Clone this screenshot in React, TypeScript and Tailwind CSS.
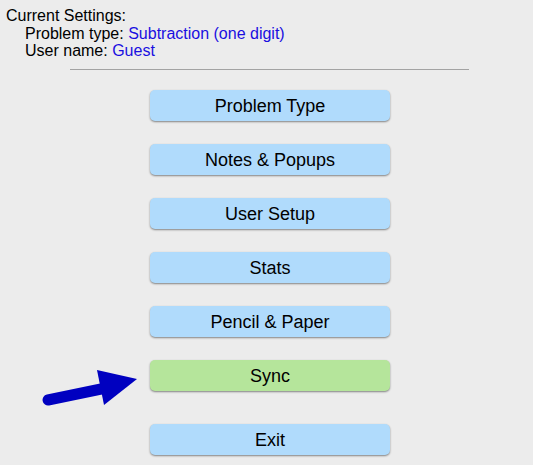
import React from "react";

const buttons = [
  { label: "Problem Type", color: "blue" },
  { label: "Notes & Popups", color: "blue" },
  { label: "User Setup", color: "blue" },
  { label: "Stats", color: "blue" },
  { label: "Pencil & Paper", color: "blue" },
  { label: "Sync", color: "green" },
];

function MenuButton({ label, color }: { label: string; color: string }) {
  return (
    <button
      type="button"
      className={
        "h-[31px] w-[240px] rounded-[5px] pt-[2px] text-[18px] text-black shadow-[0_1px_2px_rgba(0,0,0,0.45)] " +
        (color === "green" ? "bg-[#b5e59b]" : "bg-[#b0dbfc]")
      }
    >
      {label}
    </button>
  );
}

export default function App() {
  return (
    <main className="min-h-[465px] w-[533px] bg-[#ececec] pt-[7px] font-['Liberation_Sans',Arial,sans-serif] text-black">
      <div className="pl-[6px] text-[16px] leading-[17.5px]">
        <p>Current Settings:</p>
        <div className="pl-[19px]">
          <p>
            Problem type: <span className="text-[#1a0fe0]">Subtraction (one digit)</span>
          </p>
          <p>
            User name: <span className="text-[#1a0fe0]">Guest</span>
          </p>
        </div>
      </div>

      <div className="ml-[70px] mt-[9px] h-px w-[399px] bg-[#a3a3a3]" />

      <div className="ml-[150px] mt-[20px] flex flex-col gap-[23px]">
        {buttons.map((b) =>
          b.label === "Sync" ? (
            <div key={b.label} className="relative">
              <svg
                className="absolute left-[-110px] top-[8px]"
                width="100"
                height="40"
                viewBox="0 0 100 40"
              >
                <line x1="8" y1="32" x2="66" y2="20" stroke="#0000c0" strokeWidth="11" strokeLinecap="round" />
                <polygon points="57,2 97,11 64,37" fill="#0000c0" />
              </svg>
              <MenuButton label={b.label} color={b.color} />
            </div>
          ) : (
            <MenuButton key={b.label} label={b.label} color={b.color} />
          )
        )}
        <div className="mt-[10px]">
          <MenuButton label="Exit" color="blue" />
        </div>
      </div>
    </main>
  );
}
